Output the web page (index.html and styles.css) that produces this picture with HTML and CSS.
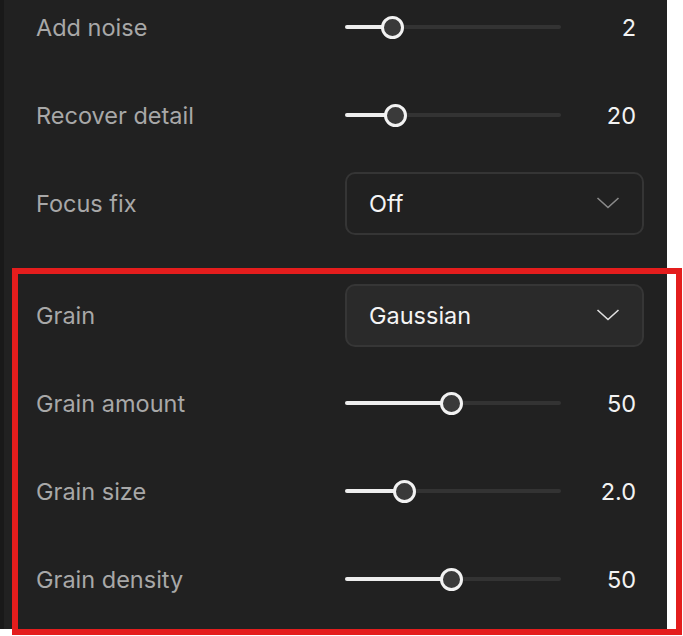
FILE: index.html
```html
<!DOCTYPE html>
<html>
<head>
<meta charset="utf-8">
<link rel="stylesheet" href="styles.css">
</head>
<body>
<div class="panel">
  <div class="group">
    <div class="row">
      <div class="label">Add noise</div>
      <div class="slider">
        <div class="track"><div class="fill" style="width:47px"></div><div class="thumb" style="left:47px"></div></div>
        <div class="value">2</div>
      </div>
    </div>
    <div class="row">
      <div class="label">Recover detail</div>
      <div class="slider">
        <div class="track"><div class="fill" style="width:50px"></div><div class="thumb" style="left:50px"></div></div>
        <div class="value">20</div>
      </div>
    </div>
    <div class="row">
      <div class="label">Focus fix</div>
      <div class="select">
        <span>Off</span>
        <svg class="chev" width="24" height="14" viewBox="0 0 24 14"><path d="M1.5 2 L12 11.5 L22.5 2" fill="none" stroke="currentColor" stroke-width="1.6"/></svg>
      </div>
    </div>
  </div>
  <div class="group second">
    <div class="row">
      <div class="label">Grain</div>
      <div class="select active">
        <span>Gaussian</span>
        <svg class="chev" width="24" height="14" viewBox="0 0 24 14"><path d="M1.5 2 L12 11.5 L22.5 2" fill="none" stroke="currentColor" stroke-width="1.6"/></svg>
      </div>
    </div>
    <div class="row">
      <div class="label">Grain amount</div>
      <div class="slider">
        <div class="track"><div class="fill" style="width:106px"></div><div class="thumb" style="left:106px"></div></div>
        <div class="value">50</div>
      </div>
    </div>
    <div class="row">
      <div class="label">Grain size</div>
      <div class="slider">
        <div class="track"><div class="fill" style="width:59px"></div><div class="thumb" style="left:59px"></div></div>
        <div class="value">2.0</div>
      </div>
    </div>
    <div class="row">
      <div class="label">Grain density</div>
      <div class="slider">
        <div class="track"><div class="fill" style="width:106px"></div><div class="thumb" style="left:106px"></div></div>
        <div class="value">50</div>
      </div>
    </div>
  </div>
</div>
<div class="highlight"></div>
</body>
</html>
```
FILE: styles.css
```css
html, body {
  margin: 0;
  padding: 0;
  background: #ffffff;
}
body {
  font-family: Inter, "Noto Sans", "Liberation Sans", sans-serif;
  width: 683px;
  height: 636px;
  overflow: hidden;
  position: relative;
}
.panel {
  width: 667px;
  height: 629px;
  background: #212121;
  border-left: 4px solid #191919;
  padding: 0 23px 0 32px;
  box-sizing: border-box;
  overflow: hidden;
}
.group {
  margin-top: -17px;
}
.group.second {
  margin-top: 24px;
}
.row {
  height: 88px;
  display: grid;
  grid-template-columns: 1fr 299px;
  align-items: center;
}
.label {
  color: #a8a8a8;
  font-size: 23.5px;
}
.slider {
  display: flex;
  align-items: center;
}
.track {
  position: relative;
  width: 216px;
  height: 4px;
  border-radius: 2px;
  background: #333333;
}
.fill {
  height: 4px;
  border-radius: 2px;
  background: #eeeeee;
}
.thumb {
  position: absolute;
  top: 50%;
  width: 17px;
  height: 17px;
  margin-left: -11.5px;
  margin-top: -11.5px;
  border: 3px solid #f2f2f2;
  border-radius: 50%;
  background: #3a3a3a;
}
.value {
  flex: 1;
  text-align: right;
  padding-right: 8px;
  color: #f2f2f2;
  font-size: 23.5px;
}
.select {
  height: 63px;
  box-sizing: border-box;
  border: 2px solid #353535;
  border-radius: 10px;
  display: flex;
  align-items: center;
  justify-content: space-between;
  padding: 0 22px 0 22px;
  color: #f4f4f4;
  font-size: 23.5px;
}
.select .chev {
  color: #8a8a8a;
}
.select.active {
  background: #2a2a2a;
  border-color: #363636;
}
.select.active .chev {
  color: #e0e0e0;
}
.highlight {
  position: absolute;
  left: 12px;
  top: 268px;
  width: 670px;
  height: 367px;
  box-sizing: border-box;
  border: 6px solid #e41d1d;
}
```
